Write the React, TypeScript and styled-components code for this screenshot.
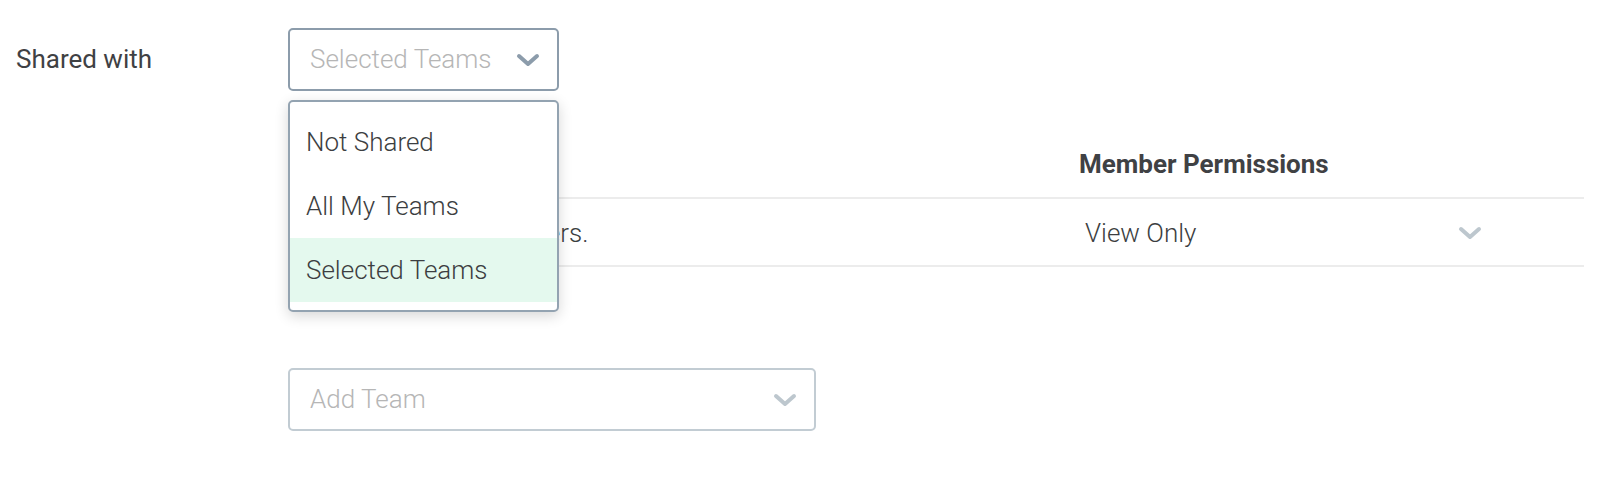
import styled, { createGlobalStyle } from "styled-components";

const GlobalStyle = createGlobalStyle`
    body {
        margin: 0;
        background: #fff;
        font-family: Roboto, "Liberation Sans", sans-serif;
        color: #3c3e41;
    }
`;

const OPTIONS = ["Not Shared", "All My Teams", "Selected Teams"];
const SELECTED = "Selected Teams";

const Chevron = ({ color }: { color: string }) => (
    <svg width="24" height="14" viewBox="0 0 24 14" fill="none">
        <path
            d="M3 3 L12 11 L21 3"
            stroke={color}
            strokeWidth="4"
            strokeLinecap="round"
            strokeLinejoin="round"
        />
    </svg>
);

export default function App() {
    return (
        <>
            <GlobalStyle />
            <Page>
                <FormRow>
                    <Label>Shared with</Label>
                    <Field>
                        <SelectWrap>
                            <SelectBox open>
                                <Placeholder>{SELECTED}</Placeholder>
                                <Chevron color="#8c9cab" />
                            </SelectBox>
                            <Menu>
                                {OPTIONS.map((opt) => (
                                    <MenuItem key={opt} active={opt === SELECTED}>
                                        {opt}
                                    </MenuItem>
                                ))}
                            </Menu>
                        </SelectWrap>

                        <TeamsTable>
                            <thead>
                                <tr>
                                    <HeadCell />
                                    <HeadCell>Member Permissions</HeadCell>
                                </tr>
                            </thead>
                            <tbody>
                                <tr>
                                    <BodyCell>Shared with all members.</BodyCell>
                                    <BodyCell>
                                        <PermissionSelect>
                                            <span>View Only</span>
                                            <Chevron color="#bdc7ce" />
                                        </PermissionSelect>
                                    </BodyCell>
                                </tr>
                            </tbody>
                        </TeamsTable>

                        <AddTeam>
                            <Placeholder>Add Team</Placeholder>
                            <Chevron color="#bdc7ce" />
                        </AddTeam>
                    </Field>
                </FormRow>
            </Page>
        </>
    );
}

const Page = styled.div`
    padding: 28px 0 0 16px;
    min-height: 472px;
`;

const FormRow = styled.div`
    display: grid;
    grid-template-columns: 272px 1296px;
    align-items: start;
`;

const Label = styled.div`
    font-size: 26px;
    line-height: 63px;
    font-weight: 400;
    color: #3f4144;
`;

const Field = styled.div`
    display: flex;
    flex-direction: column;
    align-items: flex-start;
`;

const SelectWrap = styled.div`
    position: relative;
    width: 271px;
`;

const SelectBox = styled.div<{ open?: boolean }>`
    box-sizing: border-box;
    height: 63px;
    display: flex;
    align-items: center;
    justify-content: space-between;
    padding: 0 17px 0 20px;
    border: 2px solid ${(p) => (p.open ? "#8c9cab" : "#c2ccd3")};
    border-radius: 5px;
    background: #fff;
`;

const Placeholder = styled.span`
    font-size: 26px;
    line-height: 59px;
    font-weight: 300;
    color: #b6b6b6;
`;

const Menu = styled.div`
    position: absolute;
    z-index: 10;
    top: calc(100% + 9px);
    left: 0;
    right: 0;
    padding: 8px 0;
    border: 2px solid #93a3b1;
    border-radius: 5px;
    background: #fff;
    box-shadow: 0 4px 14px rgba(0, 0, 0, 0.16);
`;

const MenuItem = styled.div<{ active: boolean }>`
    height: 64px;
    padding: 0 16px;
    font-size: 26px;
    line-height: 64px;
    font-weight: 300;
    color: #3c3e41;
    background: ${(p) => (p.active ? "#e4f9ee" : "transparent")};
`;

const TeamsTable = styled.table`
    width: 1296px;
    margin-top: 40px;
    border-collapse: collapse;
    table-layout: fixed;

    th:first-child,
    td:first-child {
        width: 779px;
        padding-left: 12px;
    }
`;

const HeadCell = styled.th`
    padding: 18px 0;
    text-align: left;
    font-size: 26px;
    line-height: 30px;
    font-weight: 700;
    color: #3f4144;
    border-bottom: 2px solid #ececec;
`;

const BodyCell = styled.td`
    padding: 19px 0 17px 0;
    font-size: 26px;
    line-height: 30px;
    font-weight: 300;
    color: #3c3e41;
    border-bottom: 2px solid #ececec;
`;

const PermissionSelect = styled.div`
    width: 421px;
    box-sizing: border-box;
    display: flex;
    align-items: center;
    justify-content: space-between;
    padding: 0 18px 0 6px;
`;

const AddTeam = styled(SelectBox)`
    width: 528px;
    margin-top: 101px;
`;
